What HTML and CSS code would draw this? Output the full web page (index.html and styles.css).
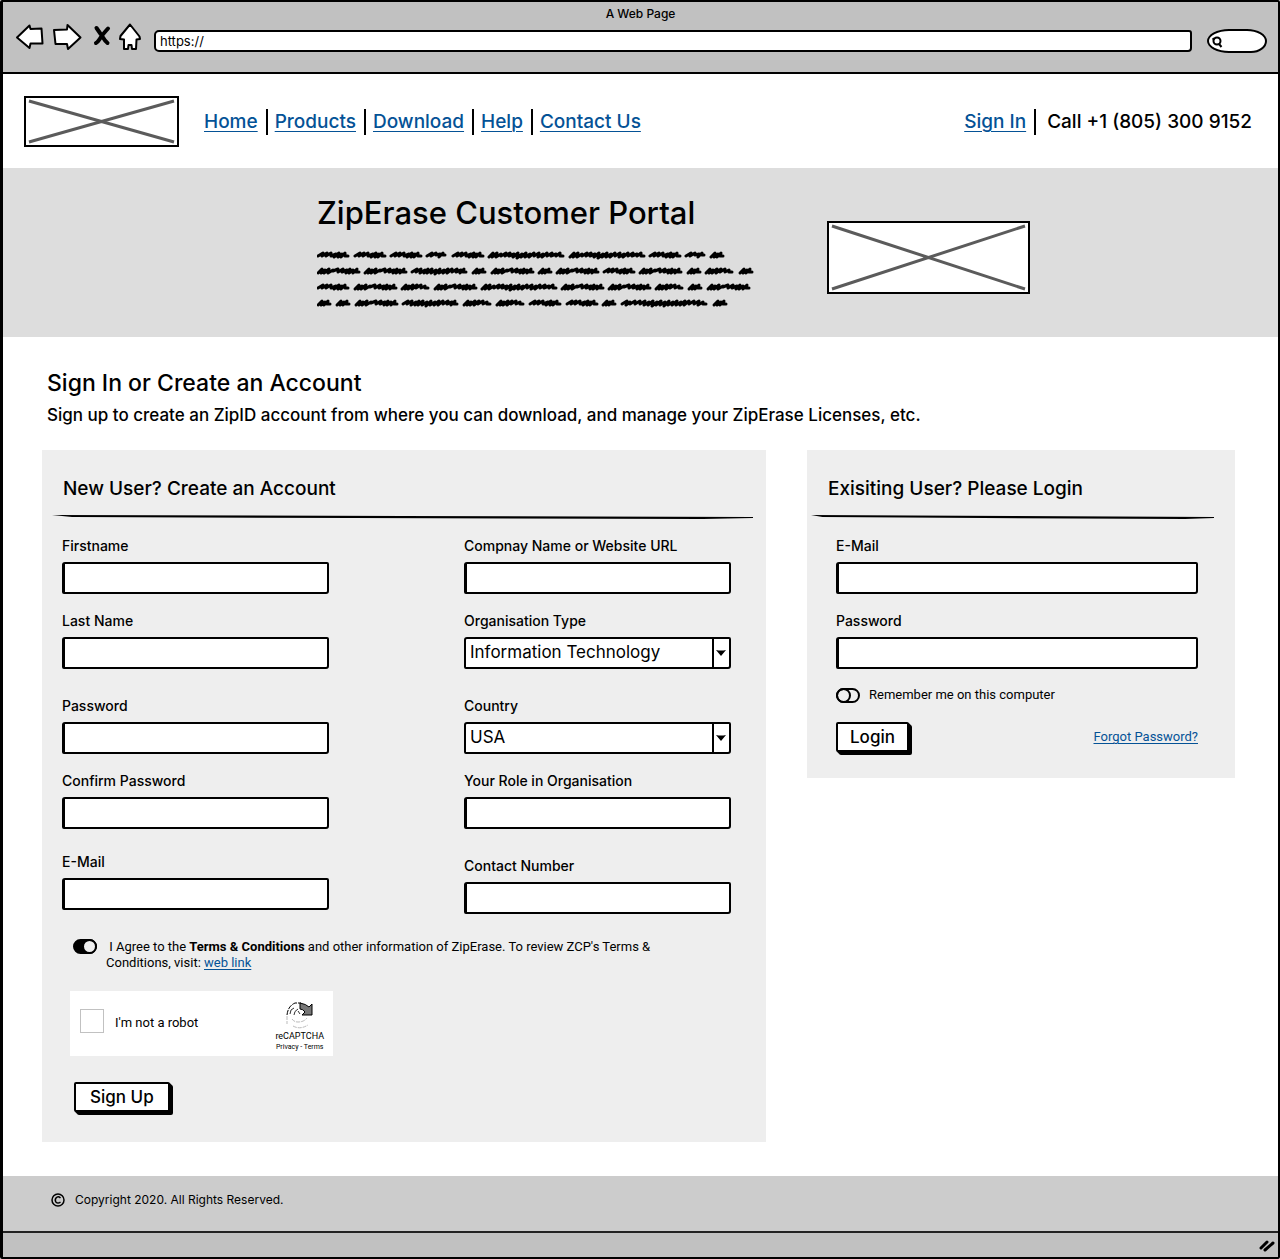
FILE: index.html
```html
<!DOCTYPE html>
<html lang="en">
<head>
<meta charset="utf-8">
<meta name="viewport" content="width=device-width, initial-scale=1">
<title>ZipErase Customer Portal</title>
<link rel="stylesheet" href="styles.css">
</head>
<body>
<div class="browser">
  <div class="chrome">
    <div class="chrome-title">A Web Page</div>
    <div class="toolbar">
      <svg class="toolbar-icons" width="128" height="32" viewBox="14 21 128 32" fill="#fff" stroke="#000" stroke-width="2" stroke-linejoin="round" aria-hidden="true">
        <path d="M17 37.500L29.500 25.500L30.500 29L41.500 28.500L42.500 43.500L30.500 43.500L29.500 48Z"/>
        <path d="M80.500 37.500L67.500 25L67 29.500L54 30L55.500 44L67 44L68 49Z"/>
        <path d="M96.500 28Q100 33 102 36Q105 41 107.500 43M108 28.500Q103 34 101 37Q98 42 96 43" fill="none" stroke-width="4" stroke-linecap="round"/>
        <path d="M130 24.500L139.500 36.500L140 39L136.500 39.500L136 49L132 49L131.500 45L128.500 45L128 49L124 49L124 39.500L120 39L120.500 36Z"/>
      </svg>
      <input class="url" type="text" value="https://" aria-label="Address">
      <label class="search">
        <svg width="13" height="13" viewBox="0 0 13 13" fill="none" stroke="#000" stroke-width="2" aria-hidden="true"><circle cx="6" cy="6" r="3.500"/><path d="M1.500 4.500L3.500 3.500M8 9L10.500 12"/></svg>
        <input type="text" aria-label="Search">
      </label>
    </div>
  </div>

  <header class="header">
    <svg class="logo" viewBox="0 0 155 51" role="img" aria-label="Logo"><rect x="1" y="1" width="153" height="49" fill="#fff" stroke="#000" stroke-width="2"/><path d="M5 5L150 46M5 46L150 5" stroke="#5b5b5b" stroke-width="3"/></svg>
    <nav class="links">
      <a href="#">Home</a>
      <a href="#">Products</a>
      <a href="#">Download</a>
      <a href="#">Help</a>
      <a href="#">Contact Us</a>
    </nav>
    <div class="links contact">
      <a href="#">Sign In</a>
      <span>Call +1 (805) 300 9152</span>
    </div>
  </header>

  <section class="banner">
    <div class="banner-text">
      <h1>ZipErase Customer Portal</h1>
      <svg class="scribble" width="440" height="60" viewBox="0 0 440 60" role="img" aria-label="Placeholder text">
        <defs>
          <path id="w14" d="M1 7L5 3L4 7L8 4L7 7L11 3L10 6L13 6"/>
          <path id="w20" d="M1 6L6 3L5 6L10 3L10 5L14 4L13 7L17 3L17 5L19 5"/>
          <path id="w28" d="M1 7L5 3L4 7L8 4L7 7L12 3L11 7L16 3L15 6L20 3L20 6L24 4L24 6L27 6"/>
          <path id="w32" d="M1 6L6 3L5 6L10 3L9 6L14 3L14 6L19 4L17 7L22 3L21 7L25 4L24 7L28 3L28 6L31 6"/>
          <path id="w43" d="M1 7L5 3L4 7L8 4L7 7L12 3L11 7L16 4L16 5L21 3L21 6L26 3L25 6L30 4L29 7L33 3L32 7L36 4L36 7L40 3L39 6L42 6"/>
          <path id="w56" d="M1 6L6 3L5 6L10 3L9 7L14 4L13 7L17 3L16 7L21 3L20 7L25 4L24 8L29 3L28 7L33 4L32 7L37 3L36 7L41 3L41 6L46 3L45 6L50 4L49 7L53 3L52 6L55 6"/>
          <path id="w76" d="M1 7L5 3L4 7L9 3L8 7L13 4L13 6L18 3L17 6L22 3L21 6L26 4L25 7L30 3L29 8L34 4L33 7L38 3L37 7L42 4L41 7L46 3L46 6L51 3L50 7L55 4L54 7L59 3L59 6L64 3L63 6L68 4L68 6L72 3L72 6L75 6"/>
          <path id="w86" d="M1 6L6 3L5 7L9 4L9 6L14 3L14 6L19 3L19 6L24 3L23 7L28 4L27 7L32 3L31 8L36 4L35 7L40 3L39 7L44 4L43 8L48 3L47 7L52 4L51 7L56 3L55 7L60 4L59 7L64 3L63 7L68 3L68 6L73 3L73 6L78 3L77 7L82 4L82 6L85 6"/>
        </defs>
        <g fill="none" stroke="#000" stroke-width="3" stroke-linecap="round" stroke-linejoin="round">
          <use href="#w32"/><use href="#w32" x="37"/><use href="#w32" x="73"/><use href="#w20" x="109"/><use href="#w32" x="135"/><use href="#w76" x="171"/><use href="#w76" x="252"/><use href="#w32" x="332"/><use href="#w20" x="368"/><use href="#w14" x="393"/>
          <use href="#w43" y="16"/><use href="#w43" x="47" y="16"/><use href="#w56" x="94" y="16"/><use href="#w14" x="155" y="16"/><use href="#w43" x="174" y="16"/><use href="#w14" x="221" y="16"/><use href="#w43" x="239" y="16"/><use href="#w32" x="286" y="16"/><use href="#w43" x="322" y="16"/><use href="#w14" x="370" y="16"/><use href="#w28" x="388" y="16"/><use href="#w14" x="422" y="16"/>
          <use href="#w32" y="32"/><use href="#w43" x="37" y="32"/><use href="#w28" x="84" y="32"/><use href="#w43" x="117" y="32"/><use href="#w76" x="164" y="32"/><use href="#w43" x="244" y="32"/><use href="#w43" x="291" y="32"/><use href="#w28" x="338" y="32"/><use href="#w14" x="371" y="32"/><use href="#w43" x="390" y="32"/>
          <use href="#w14" y="48"/><use href="#w14" x="19" y="48"/><use href="#w43" x="38" y="48"/><use href="#w56" x="85" y="48"/><use href="#w28" x="146" y="48"/><use href="#w28" x="179" y="48"/><use href="#w32" x="212" y="48"/><use href="#w32" x="249" y="48"/><use href="#w14" x="285" y="48"/><use href="#w86" x="304" y="48"/><use href="#w14" x="396" y="48"/>
        </g>
      </svg>
    </div>
    <svg class="picture" viewBox="0 0 203 73" role="img" aria-label="Banner image"><rect x="1" y="1" width="201" height="71" fill="#fff" stroke="#000" stroke-width="2"/><path d="M5 5L198 68M5 68L198 5" stroke="#5b5b5b" stroke-width="3"/></svg>
  </section>

  <main class="main">
    <h2>Sign In or Create an Account</h2>
    <p class="intro">Sign up to create an ZipID account from where you can download, and manage your ZipErase Licenses, etc.</p>

    <div class="cards">
      <form class="card">
        <h3>New User? Create an Account</h3>
        <svg class="rule" height="4" viewBox="0 0 700 4" preserveAspectRatio="none" aria-hidden="true"><path d="M0 0L350 1L700 2V3L650 4L300 3L20 2Z"/></svg>
        <div class="columns">
          <div class="column">
            <div class="group">
              <div class="field"><label for="first">Firstname</label><input id="first" type="text"></div>
              <div class="field"><label for="last">Last Name</label><input id="last" type="text"></div>
            </div>
            <div class="group">
              <div class="field"><label for="pass">Password</label><input id="pass" type="password"></div>
              <div class="field"><label for="confirm">Confirm Password</label><input id="confirm" type="password"></div>
            </div>
            <div class="group group-near">
              <div class="field"><label for="email">E-Mail</label><input id="email" type="email"></div>
            </div>
          </div>
          <div class="column">
            <div class="group">
              <div class="field"><label for="company">Compnay Name or Website URL</label><input id="company" type="text"></div>
              <div class="field"><label for="type">Organisation Type</label>
                <div class="select"><select id="type"><option>Information Technology</option></select><svg width="10" height="6" viewBox="0 0 10 6" aria-hidden="true"><path d="M0 0Q5 1 10 0L5 6Z"/></svg></div></div>
            </div>
            <div class="group">
              <div class="field"><label for="country">Country</label>
                <div class="select"><select id="country"><option>USA</option></select><svg width="10" height="6" viewBox="0 0 10 6" aria-hidden="true"><path d="M0 0Q5 1 10 0L5 6Z"/></svg></div></div>
              <div class="field"><label for="role">Your Role in Organisation</label><input id="role" type="text"></div>
            </div>
            <div class="group">
              <div class="field"><label for="phone">Contact Number</label><input id="phone" type="tel"></div>
            </div>
          </div>
        </div>
        <div class="agree">
          <input class="toggle" id="agree" type="checkbox" checked>
          <label for="agree">&nbsp;I Agree to the <b>Terms &amp; Conditions</b> and other information of ZipErase. To review ZCP's Terms &amp; Conditions, visit: <a href="#">web link</a></label>
        </div>
        <div class="captcha">
          <input id="robot" type="checkbox">
          <label for="robot">I'm not a robot</label>
          <div class="captcha-brand">
            <svg width="28" height="28" viewBox="0 0 28 28" fill="none" aria-hidden="true">
              <path d="M1 13Q2 4 9 1H15" stroke="#000" stroke-dasharray="5 1"/>
              <path d="M14 1Q20 2 23 5L26 2V13H16L19 10Q17 7 14 7Z" fill="#777" stroke="#000"/>
              <path d="M4 12Q4 7 8 6M8 13Q8 9 12 7M12 9L14 12" stroke="#333"/>
              <path d="M1 14V22M6 17Q8 20 12 20Q18 20 21 16M7 24Q14 28 22 23" stroke="#bbb" stroke-dasharray="4 1"/>
            </svg>
            <span class="captcha-name">reCAPTCHA</span>
            <span class="captcha-terms">Privacy - Terms</span>
          </div>
        </div>
        <button class="button" type="button">Sign Up</button>
      </form>

      <form class="card card-login">
        <h3>Exisiting User? Please Login</h3>
        <svg class="rule" height="4" viewBox="0 0 700 4" preserveAspectRatio="none" aria-hidden="true"><path d="M0 0L350 1L700 2V3L650 4L300 3L20 2Z"/></svg>
        <div class="login-body">
          <div class="group">
            <div class="field"><label for="login-email">E-Mail</label><input id="login-email" type="email"></div>
            <div class="field"><label for="login-pass">Password</label><input id="login-pass" type="password"></div>
          </div>
          <div class="remember">
            <input class="toggle" id="remember" type="checkbox">
            <label for="remember">Remember me on this computer</label>
          </div>
          <div class="login-actions">
            <button class="button" type="button">Login</button>
            <a href="#">Forgot Password?</a>
          </div>
        </div>
      </form>
    </div>
  </main>

  <footer class="footer">
    <svg width="14" height="14" viewBox="0 0 14 14" fill="none" stroke="#000" aria-hidden="true"><circle cx="7" cy="7" r="6" stroke-width="1.500"/><path d="M9.500 5Q7 2.500 5 5Q3.500 7 5 9.200Q7 11 9.500 9" stroke-width="1.500"/></svg>
    <span>Copyright 2020. All Rights Reserved.</span>
  </footer>
  <div class="statusbar">
    <svg width="16" height="14" viewBox="0 0 16 14" fill="none" stroke="#000" stroke-width="3" stroke-linecap="round" aria-hidden="true"><path d="M2 10L8 4M6 12L14 5"/></svg>
  </div>
</div>
</body>
</html>
```
FILE: styles.css
```css
* { box-sizing: border-box; }

body {
  margin: 0;
  background: #fff;
  color: #000;
  font-family: Inter, "Liberation Sans", sans-serif;
  font-size: 14px;
  font-weight: 500;
  line-height: 16px;
}

h1, h2, h3, p { margin: 0; font-weight: 500; }
input, select, button { font: inherit; color: inherit; }
a { color: #045296; text-underline-offset: 2px; text-decoration-thickness: 1px; }

.browser {
  display: flex;
  flex-direction: column;
  min-height: 100vh;
  padding: 1px;
  background: #fff;
  border: 2px solid #000;
  border-left-width: 3px;
  border-radius: 2px;
}

/* Browser chrome */
.chrome {
  height: 72px;
  margin: -1px -1px 0;
  padding: 4px 11px 0 11px;
  background: #c1c1c1;
  border-bottom: 2px solid #000;
}
.chrome-title { font-size: 12px; line-height: 15px; text-align: center; }
.toolbar { display: flex; align-items: center; }
.toolbar-icons { flex: none; margin-right: 12px; }
.url {
  flex: 1;
  min-width: 0;
  height: 22px;
  margin-top: 8px;
  padding: 0 4px;
  font-size: 13px;
  font-weight: 400;
  background: #fff;
  border: 2px solid #000;
  border-radius: 5px 3px 4px 5px;
}
.search {
  display: flex;
  align-items: center;
  width: 60px;
  height: 24px;
  margin: 8px 0 0 15px;
  padding-left: 2px;
  background: #fff;
  border: 2px solid #000;
  border-radius: 22px 20px 16px 22px / 12px;
}
.search input { width: 36px; border: 0; background: none; outline: 0; }

/* Site header */
.header {
  display: flex;
  align-items: center;
  height: 94px;
  padding: 0 25px 0 20px;
}
.logo { flex: none; width: 155px; height: 51px; margin-right: 25px; }
.links { display: flex; padding-top: 1px; font-size: 19px; line-height: 26px; }
.links > * + * {
  margin-left: 8px;
  padding-left: 7px;
  border-left: 2px solid #000;
}
.links a { white-space: nowrap; text-underline-offset: 3px; }
.contact { margin-left: auto; }
.contact > span { padding-left: 11px; }

/* Banner */
.banner {
  display: flex;
  justify-content: center;
  align-items: center;
  gap: 70px;
  min-height: 169px;
  margin: 0 -1px;
  padding: 10px 0 0 66px;
  background: #ddd;
}
.banner-text { padding-bottom: 12px; }
.banner h1 { font-size: 31px; line-height: 40px; }
.scribble { display: block; margin-top: 17px; }
.picture { flex: none; width: 203px; height: 73px; }

/* Main */
.main { flex: 1; padding: 32px 42px 34px 38px; }
.main h2 { padding-left: 5px; font-size: 23px; line-height: 28px; }
.intro { padding: 8px 5px 25px; font-size: 17px; line-height: 20px; }
.cards {
  display: grid;
  grid-template-columns: 724fr 428fr;
  align-items: start;
  gap: 41px;
}
.card { padding: 27px 13px 30px 10px; background: #eee; }
.card h3 { padding-left: 11px; font-size: 19px; line-height: 24px; }
.rule { display: block; width: 100%; margin: 14px 0 19px; }

.columns { display: flex; justify-content: space-between; padding: 0 22px 0 10px; }
.column { width: 267px; }
.group { display: flex; flex-direction: column; gap: 19px; }
.group + .group { margin-top: 29px; }
.group + .group-near { margin-top: 25px; }
.field { display: flex; flex-direction: column; gap: 8px; }
.field input, .select select {
  width: 100%;
  height: 32px;
  padding: 0 5px;
  background: #fff;
  border: 2px solid #000;
  border-radius: 3px 2px 3px 2px;
}
.field input { border-left-width: 3px; }
.select { display: grid; align-items: center; }
.select > * { grid-area: 1 / 1; }
.select select {
  appearance: none;
  font-size: 17px;
  font-weight: 400;
  line-height: 24px;
  padding: 0 4px 2px;
  background: linear-gradient(#000, #000) right 15px top / 2px 100% no-repeat #fff;
}
.select svg { justify-self: end; margin-right: 5px; pointer-events: none; }

/* Toggle switch */
.toggle {
  appearance: none;
  flex: none;
  width: 24px;
  height: 15px;
  margin: 0;
  border: 2px solid #000;
  border-radius: 8px;
}
.toggle::before {
  content: "";
  display: block;
  box-sizing: border-box;
  width: 15px;
  height: 15px;
  margin: -2px;
  border: 2px solid #000;
  border-radius: 50%;
}
.toggle:checked { background: #000; }
.toggle:checked::before { margin-left: 7px; background: #eee; }

.agree {
  display: flex;
  align-items: flex-start;
  gap: 9px;
  padding: 25px 75px 20px 21px;
  font-family: Roboto, sans-serif;
  font-size: 13px;
  font-weight: 400;
}

/* Captcha */
.captcha {
  display: flex;
  align-items: center;
  width: 263px;
  height: 65px;
  margin-left: 18px;
  padding: 0 9px 2px 10px;
  background: #fff;
  font-family: Roboto, sans-serif;
  font-size: 13px;
  font-weight: 400;
}
.captcha input {
  appearance: none;
  width: 24px;
  height: 24px;
  margin: -4px 11px 0 0;
  border: 1px solid #c1c1c1;
}
.captcha-brand {
  display: flex;
  flex-direction: column;
  align-items: center;
  margin-left: auto;
  padding-top: 8px;
}
.captcha-name { font-size: 9px; line-height: 12px; }
.captcha-terms { font-size: 7px; line-height: 10px; }

/* Buttons */
.button {
  height: 30px;
  padding: 0 12px;
  font-size: 17px;
  background: #fff;
  border: 2px solid #000;
  border-radius: 2px;
  box-shadow: 1px 1px #000, 2px 2px #000, 3px 3px #000;
}
.card > .button { display: block; margin: 26px 0 0 22px; padding: 0 14px; }

/* Login card */
.card-login { padding: 27px 21px 26px 4px; }
.card-login h3 { padding-left: 17px; }
.login-body { padding: 0 16px 0 25px; }
.remember {
  display: flex;
  align-items: center;
  gap: 9px;
  padding: 18px 0 19px;
  font-family: Roboto, sans-serif;
  font-size: 13px;
  font-weight: 400;
}
.login-actions {
  display: flex;
  align-items: center;
  justify-content: space-between;
}
.login-actions a { font-family: Roboto, sans-serif; font-size: 13px; font-weight: 400; }

/* Footer */
.footer {
  display: flex;
  align-items: center;
  gap: 10px;
  height: 55px;
  margin: 0 -1px;
  padding: 0 48px 8px;
  background: #ccc;
  font-size: 12px;
  font-weight: 400;
}
.statusbar {
  display: flex;
  justify-content: flex-end;
  align-items: center;
  height: 26px;
  margin: 0 -1px -1px;
  padding-right: 3px;
  background: #c1c1c1;
  border-top: 2px solid #222;
}
```
